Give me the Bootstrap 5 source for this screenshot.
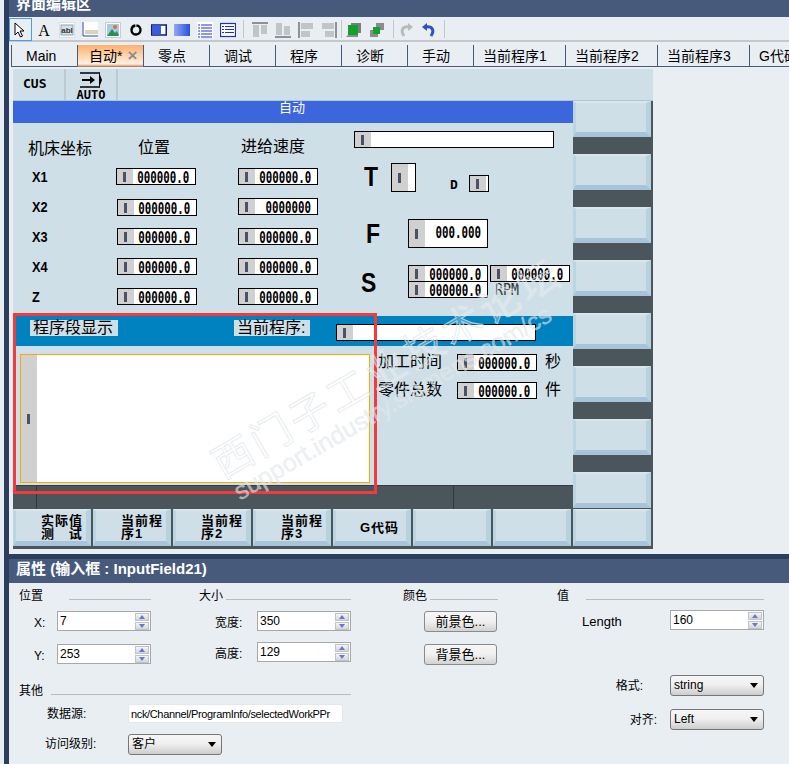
<!DOCTYPE html>
<html lang="zh">
  <head>
    <meta charset="utf-8" />
    <meta name="viewport" content="width=device-width, initial-scale=1.0" />
    <title>界面编辑区</title>
    <link href="https://cdn.jsdelivr.net/npm/bootstrap@5.3.0/dist/css/bootstrap.min.css" rel="stylesheet" />
    <style>
      html, body { height: 100%; margin: 0; overflow: hidden; }
      body {
        background: #e9eef3;
        color: #000;
        font: 12px "Liberation Sans", "Noto Sans CJK SC", sans-serif;
      }
      .side-strip { width: 9px; border-left: 4px solid #e9eef3; background: #2c3e5e; flex: none; }
      .main-col { width: 780px; height: 764px; overflow: hidden; }

      .title-bar { height: 17px; background: #475a7c; color: #fff; font-weight: 700; font-size: 15px; line-height: 17px; padding-left: 7px; overflow: hidden; }
      .title-bar span { display: block; margin-top: -5px; }

      .tool-row { height: 25px; padding-top: 1px; border-bottom: 2px solid #c4c8cc; }
      .tool-btn { width: 23px; height: 23px; display: flex; align-items: center; justify-content: center; flex: none; }
      .tool-btn.picked { border: 1px solid #4a9ee8; }
      .tool-sep { width: 1px; height: 18px; background: #c4c8cc; flex: none; margin-top: 2px; }
      .sep-a { margin-left: 4px; margin-right: 4px; }
      .sep-b { margin-left: 1px; }
      .sep-c { margin-left: 5px; }
      .sep-d { margin-left: 4px; }

      .tab-row { height: 22px; margin: 3px 0 0 2px; flex-wrap: nowrap; }
      .tab-row .nav-link {
        height: 22px; width: 66px; padding: 0 0 0 14px; color: #000;
        font-size: 14px; line-height: 22px; text-align: left; white-space: nowrap;
        border-left: 1px solid #475a7c; border-bottom: 1px solid #475a7c; border-radius: 0;
      }
      .tab-row .tab-wide { width: 92px; padding-left: 9px; }
      .tab-row .tab-on { padding-left: 11px; background: linear-gradient(#fdb06a, #fff0e2 90%, #e0a070); border-bottom-color: #b08868; }
      .tab-x { color: #8a8f94; font-weight: 700; font-size: 17px; margin-left: 5px; }

      .hmi-wrap { width: 640px; height: 480px; margin: 2px 0 0 4px; background: #4a565c; position: relative; }
      .hmi-top { height: 32px; background: #cfdfe7; border-bottom: 1px solid #aec7d6; }
      .top-key { height: 31px; border-right: 2px solid #b9ccd6; flex: none; font-weight: 700; font-family: "DejaVu Sans Mono", monospace; }
      .key-cus { width: 53px; font-size: 13px; line-height: 29px; padding-left: 10px; }
      .key-auto { width: 52px; font-size: 12px; line-height: 10px; text-align: center; }
      .key-auto svg { display: block; margin: 3px auto 1px; }

      .hmi-mid { height: 408px; }
      .hmi-canvas { width: 560px; height: 408px; position: relative; background: #cfdfe7; flex: none; overflow: hidden; }
      .hmi-head { height: 22px; background: #3b66dc; color: #fff; font-size: 13px; line-height: 13px; padding-left: 266px; }
      .hmi-band { position: absolute; left: 0; top: 215px; width: 560px; height: 30px; background: #0081c0; }
      .hmi-foot { position: absolute; left: 0; top: 384px; width: 560px; height: 24px; background: #4a565c; border-top: 1px solid #333d42; }
      .foot-a { position: absolute; left: 23px; top: 0; width: 1px; height: 23px; background: #2f383c; }
      .foot-b { position: absolute; left: 440px; top: 0; width: 1px; height: 23px; background: #2f383c; }

      .soft-col { width: 78px; flex: none; }
      .soft-key {
        background: #cfdfe7; border-style: solid; border-color: #d9e7ed #b7d1de #a8c4d8 #bcd5e2;
        border-width: 2px 5px 5px 3px; flex: none; color: #000;
      }
      .soft-col .soft-key { height: 36px; margin-bottom: 17px; }
      .soft-row { gap: 2px; height: 37px; }
      .soft-row .soft-key { width: 78px; height: 37px; font-weight: 700; font-size: 13px; line-height: 13px; letter-spacing: 1px; padding: 3px 0 0 25px; white-space: pre; }
      .soft-row .soft-one { padding-top: 10px; padding-left: 24px; }

      .hm-field { position: absolute; background: #fff; border: 1px solid #000; text-align: right; }
      .hm-handle { position: absolute; left: 0; top: 0; bottom: 0; width: 16px; background: #d0d0d0; }
      .hm-handle::after { content: ""; position: absolute; left: 6px; top: 50%; width: 3px; height: 10px; margin-top: -5px; background: #4a5268; }
      .hm-num { display: block; font: 700 15px/18px "DejaVu Sans Mono", monospace; transform: scaleX(.72); transform-origin: right; margin-right: 6px; white-space: nowrap; }
      .hm-text { position: absolute; white-space: nowrap; line-height: 1; }
      .txt-cjk { font-size: 16px; }
      .txt-axis { font: 700 15px/1 "Liberation Sans", sans-serif; transform: scaleX(.85); transform-origin: left; }
      .txt-big { font: 700 27px/1 "Liberation Sans", sans-serif; transform: scaleX(.85); transform-origin: left; }
      .txt-d { font: 700 13px/1 "DejaVu Sans Mono", monospace; }
      .txt-rpm { font: 400 15px/1 "DejaVu Sans Mono", monospace; color: #333; transform: scaleX(.88); transform-origin: left; }
      .txt-tag { background: #cfdfe7; height: 16px; line-height: 16px; padding: 0 5px 0 3px; }
      .prog-box { position: absolute; left: 7px; top: 253px; width: 350px; height: 129px; background: #fff; border: 1px solid #ffa800; }

      .red-mark { position: absolute; left: 0; top: 244px; width: 364px; height: 181px; border: 3px solid #f53a3c; z-index: 5; pointer-events: none; }
      .water-mark { position: absolute; left: 193px; top: 381px; z-index: 6; transform: rotate(-30deg); transform-origin: 0 0; pointer-events: none; white-space: nowrap; }
      .water-cn { font-size: 40px; line-height: 40px; letter-spacing: 4px; -webkit-text-stroke: 1px rgba(222, 230, 235, .75); color: rgba(255, 255, 255, .3); }
      .water-en { font-size: 25px; line-height: 24px; margin-left: 4px; color: rgba(226, 232, 235, .6); -webkit-text-stroke: .4px rgba(226, 232, 235, .6); }

      .prop-gap { height: 5px; }
      .prop-title { height: 29px; background: #475a7c; border-top: 5px solid #2c3e5e; color: #fff; font-weight: 700; font-size: 15px; line-height: 20px; padding-left: 7px; }
      .prop-body { padding: 4px 0 0 10px; }
      .grp-head { height: 18px; line-height: 16px; }
      .grp-head i { flex: 1; height: 1px; background: #b8bcc0; margin-top: 6px; }
      .col-pos { width: 132px; }
      .col-size { width: 152px; margin-left: 48px; }
      .col-left { width: 332px; }
      .col-color { width: 95px; margin-left: 52px; }
      .col-val { width: 207px; margin-left: 59px; }
      .head-1 i { margin-left: 26px; }
      .head-2 i { margin-left: 3px; }
      .head-3 i { margin-left: 8px; }
      .head-4 i { margin-left: 17px; }
      .other-head { margin-top: 18px; }
      .form-row { height: 20px; margin-top: 13px; line-height: 24px; }
      .row-first { margin-top: 6px; }
      .row-tight { margin-top: 11px; }
      .row-len { margin-top: 5px; }
      .lbl-xy { width: 38px; padding-left: 15px; flex: none; }
      .lbl-wh { width: 58px; padding-left: 16px; flex: none; }
      .spin-box { width: 94px; height: 20px; background: #fff; border: 1px solid #a8a8a8; position: relative; }
      .spin-box .form-control { height: 18px; width: 78px; padding: 0 0 0 2px; border: 0; border-radius: 0; background: transparent; font-size: 12px; line-height: 15px; color: #000; box-shadow: none; }
      .spin-ctl { position: absolute; right: 1px; top: 1px; width: 14px; }
      .spin-ctl b { display: block; height: 8px; margin-bottom: 1px; background: linear-gradient(#f4f4f4, #d4d6da); border: 1px solid #c0c4c8; position: relative; }
      .spin-ctl b::after { content: ""; position: absolute; left: 3px; top: 1px; border: 3px solid transparent; border-top: 0; border-bottom: 4px solid #6a78c8; }
      .spin-ctl b.spin-dn::after { border-bottom: 0; border-top: 4px solid #6a78c8; top: 1px; }
      .row-other { margin-top: 4px; }
      .row-acc { margin-top: 10px; }
      .lbl-src { width: 109px; padding-left: 28px; flex: none; line-height: 20px; }
      .lbl-acc { width: 109px; padding-left: 26px; flex: none; line-height: 21px; }
      .src-input.form-control { width: 215px; height: 19px; padding: 0 0 0 2px; border: 1px solid #e4e8ec; border-radius: 2px; font-size: 11px; letter-spacing: -.35px; line-height: 17px; color: #000; box-shadow: none; }
      .old-select.form-select {
        height: 21px; width: 94px; padding: 0 0 0 3px; font-size: 12px; line-height: 19px; color: #000;
        border: 1px solid #777; border-radius: 3px; box-shadow: none;
        background-color: #e4e4e4;
        background-image: url("data:image/svg+xml,%3Csvg xmlns='http://www.w3.org/2000/svg' width='8' height='5'%3E%3Cpath d='M0 0h8L4 5z'/%3E%3C/svg%3E"), linear-gradient(#f6f6f6, #f0f0f0 45%, #cdcdcd);
        background-repeat: no-repeat; background-position: right 5px center, 0 0; background-size: 8px 5px, 100% 100%;
      }
      .old-btn.btn { width: 73px; height: 21px; padding: 0; font-size: 13px; line-height: 18px; color: #000; border: 1px solid #8a8a8a; border-radius: 3px; background: linear-gradient(#f6f6f6, #f0f0f0 50%, #d2d2d2); display: block; margin-left: 21px; }
      .btn-one { margin-top: 6px; }
      .btn-two { margin-top: 12px; }
      .lbl-len { width: 113px; padding-left: 25px; font-size: 13px; flex: none; }
      .lbl-fmt { width: 86px; text-align: right; flex: none; margin-right: 27px; line-height: 23px; }
      .lbl-ali { width: 100px; text-align: right; flex: none; margin-right: 13px; line-height: 23px; }
      .row-fmt { margin-top: 45px; height: 21px; }
      .row-ali { margin-top: 13px; height: 21px; }
    </style>
  </head>
  <body class="d-flex">
    <div class="side-strip"></div>
    <div class="main-col">
      <div class="title-bar"><span>界面编辑区</span></div>

      <div class="tool-row d-flex align-items-start" id="toolRow"></div>

      <ul class="nav tab-row">
        <li class="nav-item"><a class="nav-link" href="#">Main</a></li>
        <li class="nav-item"><a class="nav-link tab-on" href="#">自动*<span class="tab-x">×</span></a></li>
        <li class="nav-item"><a class="nav-link" href="#">零点</a></li>
        <li class="nav-item"><a class="nav-link" href="#">调试</a></li>
        <li class="nav-item"><a class="nav-link" href="#">程序</a></li>
        <li class="nav-item"><a class="nav-link" href="#">诊断</a></li>
        <li class="nav-item"><a class="nav-link" href="#">手动</a></li>
        <li class="nav-item"><a class="nav-link tab-wide" href="#">当前程序1</a></li>
        <li class="nav-item"><a class="nav-link tab-wide" href="#">当前程序2</a></li>
        <li class="nav-item"><a class="nav-link tab-wide" href="#">当前程序3</a></li>
        <li class="nav-item"><a class="nav-link tab-wide" href="#">G代码</a></li>
      </ul>

      <div class="hmi-wrap">
        <div class="hmi-top d-flex">
          <div class="top-key key-cus">CUS</div>
          <div class="top-key key-auto">
            <svg width="24" height="17" viewBox="0 0 24 17">
              <path d="M1 1h20M1 15h20" stroke="#000" stroke-width="1.4" fill="none" />
              <path d="M20 0l3 8-3 8z" fill="#000" />
              <path d="M3 8h10" stroke="#000" stroke-width="2" />
              <path d="M11 4l5 4-5 4z" fill="#000" />
            </svg>
            AUTO
          </div>
        </div>

        <div class="hmi-mid d-flex">
          <div class="hmi-canvas" id="hmiCanvas">
            <div class="hmi-head">自动</div>
            <div class="hmi-band"></div>
            <div class="prog-box"></div>
            <div class="hmi-foot"><div class="foot-a"></div><div class="foot-b"></div></div>
          </div>
          <div class="soft-col">
            <div class="soft-key"></div>
            <div class="soft-key"></div>
            <div class="soft-key"></div>
            <div class="soft-key"></div>
            <div class="soft-key"></div>
            <div class="soft-key"></div>
            <div class="soft-key"></div>
            <div class="soft-key"></div>
          </div>
        </div>

        <div class="soft-row d-flex">
          <div class="soft-key">实际值
测   试</div>
          <div class="soft-key">当前程
序1</div>
          <div class="soft-key">当前程
序2</div>
          <div class="soft-key">当前程
序3</div>
          <div class="soft-key soft-one">G代码</div>
          <div class="soft-key"></div>
          <div class="soft-key"></div>
          <div class="soft-key"></div>
        </div>

        <div class="red-mark"></div>
        <div class="water-mark">
          <div class="water-cn">西门子工业技术论坛</div>
          <div class="water-en">support.industry.siemens.com/cs</div>
        </div>
      </div>

      <div class="prop-gap"></div>
      <div class="prop-title">属性 (输入框 : InputField21)</div>

      <div class="prop-body d-flex">
        <div class="col-left">
          <div class="d-flex">
            <div class="col-pos">
              <div class="grp-head head-1 d-flex align-items-center">位置<i></i></div>
              <div class="form-row row-first d-flex"><span class="lbl-xy">X:</span><div class="spin-box"><input class="form-control" value="7" /><div class="spin-ctl"><b></b><b class="spin-dn"></b></div></div></div>
              <div class="form-row d-flex"><span class="lbl-xy">Y:</span><div class="spin-box"><input class="form-control" value="253" /><div class="spin-ctl"><b></b><b class="spin-dn"></b></div></div></div>
            </div>
            <div class="col-size">
              <div class="grp-head head-2 d-flex align-items-center">大小<i></i></div>
              <div class="form-row row-first d-flex"><span class="lbl-wh">宽度:</span><div class="spin-box"><input class="form-control" value="350" /><div class="spin-ctl"><b></b><b class="spin-dn"></b></div></div></div>
              <div class="form-row row-tight d-flex"><span class="lbl-wh">高度:</span><div class="spin-box"><input class="form-control" value="129" /><div class="spin-ctl"><b></b><b class="spin-dn"></b></div></div></div>
            </div>
          </div>
          <div class="grp-head head-3 d-flex align-items-center other-head">其他<i></i></div>
          <div class="d-flex row-other"><span class="lbl-src">数据源:</span><input class="form-control src-input" value="nck/Channel/ProgramInfo/selectedWorkPPr" /></div>
          <div class="d-flex row-acc"><span class="lbl-acc">访问级别:</span><select class="form-select old-select"><option>客户</option></select></div>
        </div>

        <div class="col-color">
          <div class="grp-head head-2 d-flex align-items-center">颜色<i></i></div>
          <button class="btn old-btn btn-one" type="button">前景色...</button>
          <button class="btn old-btn btn-two" type="button">背景色...</button>
        </div>

        <div class="col-val">
          <div class="grp-head head-4 d-flex align-items-center">值<i></i></div>
          <div class="form-row row-len d-flex"><span class="lbl-len">Length</span><div class="spin-box"><input class="form-control" value="160" /><div class="spin-ctl"><b></b><b class="spin-dn"></b></div></div></div>
          <div class="d-flex row-fmt"><span class="lbl-fmt">格式:</span><select class="form-select old-select"><option>string</option></select></div>
          <div class="d-flex row-ali"><span class="lbl-ali">对齐:</span><select class="form-select old-select"><option>Left</option></select></div>
        </div>
      </div>
    </div>

    <script>
      // toolbar icons, 16x16 box
      const g = "#8d9296", gd = "#c2c5c8";
      const tools = [
        `<path d="M2 1l0 12 3-3 2.500 5 2-1-2.500-5h4z" fill="#fff" stroke="#000"/>`,
        `<text x="8" y="14" text-anchor="middle" font-family="Liberation Serif" font-size="16">A</text>`,
        `<rect x=".5" y=".5" width="15" height="15" fill="#fff" stroke="#dde"/><rect x="2" y="3" width="12" height="10" fill="#d8dfe6" stroke="#8aa"/><text x="8" y="11" text-anchor="middle" font-size="8" font-weight="700" fill="#333">abl</text>`,
        `<rect width="16" height="16" fill="#fdfdfd"/><path d="M1 0v14h15" stroke="#3040c0" fill="none"/><rect x="3" y="8" width="13" height="4" fill="#d8d4b8"/>`,
        `<rect x=".5" y=".5" width="15" height="15" fill="#fff" stroke="#ccc"/><rect x="2" y="2" width="12" height="12" fill="#a8c8e8"/><path d="M2 14l5-7 3 4 2-2 2 5z" fill="#2a9050"/><circle cx="10" cy="5" r="2" fill="#e8702a"/>`,
        `<circle cx="8" cy="8" r="4.500" fill="none" stroke="#000" stroke-width="2.400" stroke-dasharray="26.500 1.800" transform="rotate(-85 8 8)"/>`,
        `<rect x=".75" y="3" width="14.500" height="10" fill="#fff" stroke="#0a1a8a" stroke-width="1.500"/><rect x="1" y="3.500" width="9" height="9" fill="#3b5ce0"/>`,
        `<defs><linearGradient id="gr"><stop offset="0" stop-color="#93a8f0"/><stop offset="1" stop-color="#2c50e0"/></linearGradient></defs><rect y="2" width="16" height="12" fill="url(#gr)"/>`,
        `<rect width="16" height="16" fill="#fff"/><path d="M4 3h11M4 6h11M4 9h11M4 12h11M4 15h11M1 3h2M1 6h2M1 9h2M1 12h2M1 15h2" stroke="#1c2ed0"/>`,
        `<rect x=".5" y="1.500" width="15" height="13" fill="#fff" stroke="#1c2ed0" stroke-width="1.200"/><path d="M5 4.500h9M5 7.500h9M5 10.500h9M2 4.500h2M2 7.500h2M2 10.500h2" stroke="#1c2ed0"/>`,
      ];
      const aligns = [
        `<rect y="0" width="16" height="2" fill="${g}"/><rect x="1" y="3" width="6" height="12" fill="${gd}"/><rect x="9" y="3" width="6" height="9" fill="${gd}"/>`,
        `<rect y="14" width="16" height="2" fill="${g}"/><rect x="1" y="1" width="6" height="12" fill="${gd}"/><rect x="9" y="4" width="6" height="9" fill="${gd}"/>`,
        `<rect x="0" width="2" height="16" fill="${g}"/><rect x="3" y="1" width="12" height="6" fill="${gd}"/><rect x="3" y="9" width="9" height="6" fill="${gd}"/>`,
        `<rect x="14" width="2" height="16" fill="${g}"/><rect x="1" y="1" width="12" height="6" fill="${gd}"/><rect x="4" y="9" width="9" height="6" fill="${gd}"/>`,
      ];
      const orders = [
        `<path d="M5 1h10v10h-3V4H5z" fill="#7a7d80"/><path d="M0 15l2-2h10v2z" fill="#8a8d90"/><rect x="2" y="3" width="10" height="10" fill="#14a02c"/>`,
        `<rect x="7" y="1" width="8" height="7" fill="#8a8d90"/><rect x="1" y="8" width="8" height="7" fill="#8a8d90"/><rect x="4" y="5" width="7" height="7" fill="#14a02c"/>`,
      ];
      const curl = (c) => `<path d="M6 1L1 5l5 4z" fill="${c}"/><path d="M5 5c6-1 9 3 5 9" stroke="${c}" stroke-width="3" fill="none"/>`;
      const redo = `<g transform="matrix(-1 0 0 1 16 0)">${curl("#b8bbbe")}</g>`;
      const undo = curl("#2c50c8");

      const svgIcon = (body) => `<svg width="16" height="16" viewBox="0 0 16 16">${body}</svg>`;
      const btn = (body, cls = "") => `<div class="tool-btn ${cls}">${svgIcon(body)}</div>`;
      document.getElementById("toolRow").innerHTML =
        tools.map((t, i) => btn(t, i === 0 ? "picked" : "")).join("") +
        `<div class="tool-sep sep-a"></div>` +
        aligns.map((t) => btn(t)).join("") +
        `<div class="tool-sep sep-b"></div>` +
        orders.map((t) => btn(t)).join("") +
        `<div class="tool-sep sep-c"></div>` +
        btn(redo) + btn(undo) +
        `<div class="tool-sep sep-d"></div>`;

      // widgets on the hmi screen, coordinates from the designer (x, y, w, h)
      const zero = "000000.0";
      const fields = [
        [103, 67, 80, 17, zero], [104, 98, 80, 17, zero], [104, 127, 80, 17, zero], [104, 157, 80, 17, zero], [104, 187, 80, 17, zero],
        [225, 67, 80, 17, zero], [225, 97, 80, 17, "0000000"], [225, 127, 80, 17, zero], [225, 157, 80, 17, zero], [225, 187, 80, 17, zero],
        [341, 30, 200, 17, ""], [378, 62, 25, 29, ""], [456, 74, 20, 17, ""],
        [395, 118, 80, 29, "000.000"],
        [395, 164, 80, 17, zero], [477, 164, 80, 17, zero], [395, 180, 80, 17, zero],
        [323, 223, 200, 17, ""],
        [444, 253, 80, 17, zero], [444, 281, 80, 17, zero],
      ];
      const labels = [
        [15, 40, "txt-cjk", "机床坐标"], [125, 39, "txt-cjk", "位置"], [228, 38, "txt-cjk", "进给速度"],
        [19, 68, "txt-axis", "X1"], [19, 98, "txt-axis", "X2"], [19, 128, "txt-axis", "X3"], [19, 158, "txt-axis", "X4"], [19, 188, "txt-axis", "Z"],
        [351, 63, "txt-big", "T"], [437, 77, "txt-d", "D"], [353, 120, "txt-big", "F"], [348, 169, "txt-big", "S"],
        [482, 182, "txt-rpm", "RPM"],
        [17, 219, "txt-cjk txt-tag", "程序段显示"], [221, 219, "txt-cjk txt-tag", "当前程序:"],
        [365, 253, "txt-cjk", "加工时间"], [365, 281, "txt-cjk", "零件总数"], [532, 253, "txt-cjk", "秒"], [532, 281, "txt-cjk", "件"],
      ];
      const canvas = document.getElementById("hmiCanvas");
      const place = (el, x, y, w, h) => {
        el.style.left = x + "px";
        el.style.top = y + "px";
        if (w) el.style.width = w + "px";
        if (h) el.style.height = h + "px";
        canvas.appendChild(el);
      };
      fields.forEach(([x, y, w, h, val]) => {
        const f = document.createElement("div");
        f.className = "hm-field";
        f.innerHTML = `<div class="hm-handle"></div><span class="hm-num">${val}</span>`;
        if (h > 17) f.querySelector(".hm-num").style.lineHeight = h - 2 + "px";
        place(f, x, y, w, h);
      });
      labels.forEach(([x, y, cls, text]) => {
        const t = document.createElement("div");
        t.className = "hm-text " + cls;
        t.textContent = text;
        place(t, x, y);
      });
      // handle of the program box
      const h = document.createElement("div");
      h.className = "hm-handle";
      document.querySelector(".prog-box").appendChild(h);
    </script>
    <script src="https://cdn.jsdelivr.net/npm/bootstrap@5.3.0/dist/js/bootstrap.bundle.min.js"></script>
  </body>
</html>
